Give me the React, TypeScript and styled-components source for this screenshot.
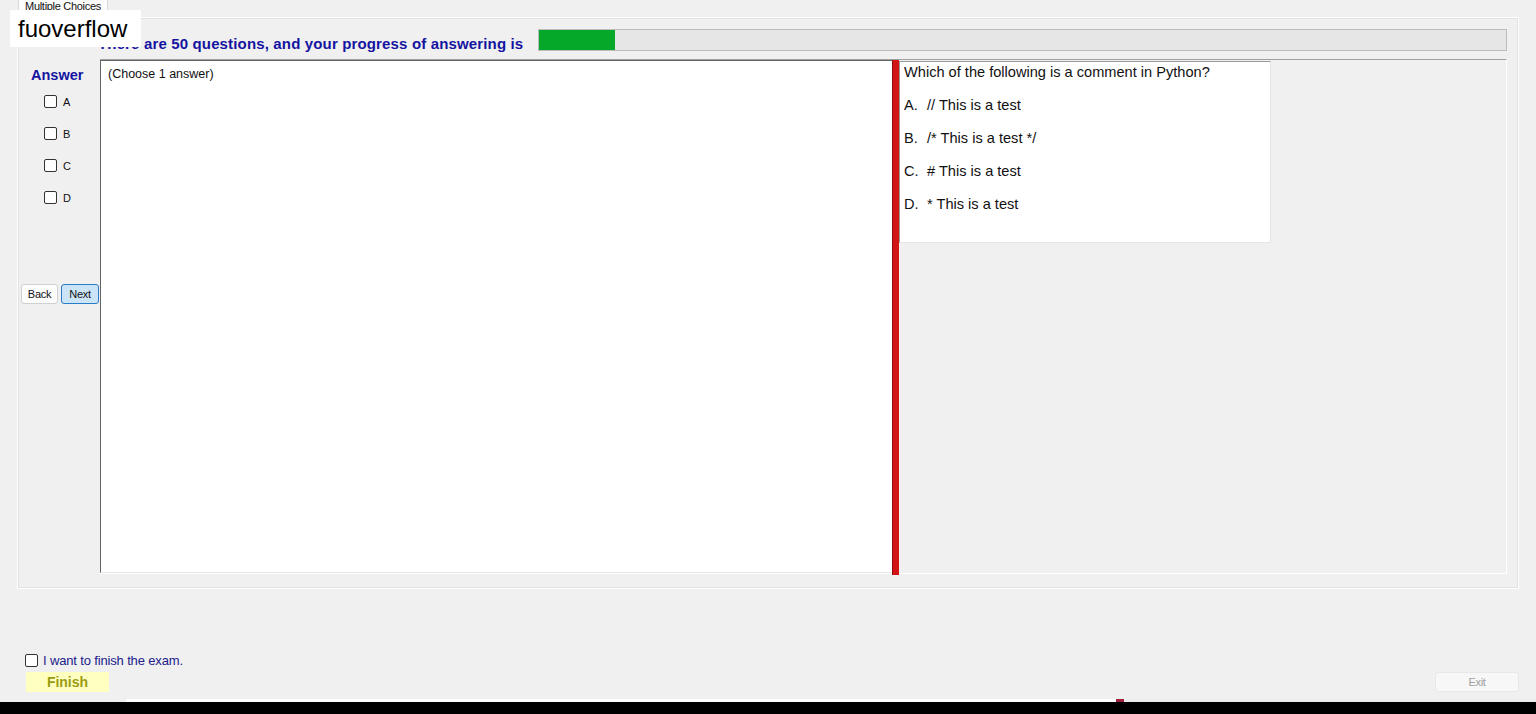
import React from "react";
import styled, { createGlobalStyle } from "styled-components";

const Global = createGlobalStyle`
  html, body { margin: 0; padding: 0; background: #f0f0f0; }
  body { font-family: "Liberation Sans", Arial, sans-serif; }
  * { box-sizing: border-box; }
`;

const Page = styled.div`
  position: relative;
  width: 1536px;
  height: 714px;
  overflow: hidden;
  background: #f0f0f0;
  display: flex;
  flex-direction: column;
  font-family: "Liberation Sans", Arial, sans-serif;
`;

const TabStrip = styled.div`
  height: 17px;
  padding-left: 18px;
  display: flex;
  align-items: flex-start;
`;

const Tab = styled.div`
  height: 18px;
  width: 90px;
  margin-top: -2px;
  background: #fcfcfc;
  border: 1px solid #d9d9d9;
  border-bottom: none;
  font-size: 11px;
  line-height: 14px;
  color: #111;
  text-align: center;
  letter-spacing: -0.3px;
  position: relative;
  z-index: 1;
`;

const Watermark = styled.div`
  position: absolute;
  left: 10px;
  top: 10px;
  width: 131px;
  height: 37px;
  background: #ffffff;
  font-size: 24px;
  line-height: 37px;
  padding-left: 8px;
  color: #000;
  z-index: 5;
`;

const Panel = styled.div`
  margin-left: 17px;
  width: 1502px;
  height: 572px;
  border: 1px solid #ffffff;
  box-shadow: inset 1px 1px 0 #e2e2e2, inset -1px -1px 0 #e2e2e2;
  display: flex;
  flex-direction: column;
  padding-top: 11px;
`;

const HeadRow = styled.div`
  height: 22px;
  display: flex;
  align-items: center;
  padding-left: 80px;
`;

const Heading = styled.div`
  font-size: 15px;
  font-weight: bold;
  color: #1414a0;
  padding-top: 7px;
  width: 440px;
  letter-spacing: 0.15px;
  white-space: nowrap;
`;

const ProgressTrack = styled.div`
  width: 969px;
  height: 22px;
  background: #e6e6e6;
  border: 1px solid #bcbcbc;
  padding: 0;
`;

const ProgressFill = styled.div`
  height: 100%;
  background: #06a82a;
`;

const MainRow = styled.div`
  margin-top: 8px;
  height: 515px;
  display: flex;
`;

const LeftCol = styled.div`
  width: 82px;
  display: flex;
  flex-direction: column;
`;

const AnswerLabel = styled.div`
  font-size: 14.5px;
  font-weight: bold;
  color: #1414a0;
  padding: 8px 0 0 13px;
  line-height: 16px;
`;

const Options = styled.div`
  margin-top: 12px;
  padding-left: 26px;
  display: flex;
  flex-direction: column;
  gap: 19px;
`;

const OptionRow = styled.label`
  display: flex;
  align-items: center;
  height: 13px;
  font-size: 11px;
  color: #111;
  gap: 6px;
`;

const Check = styled.input.attrs({ type: "checkbox" })`
  appearance: none;
  margin: 0;
  width: 13px;
  height: 13px;
  border: 1px solid #333;
  border-radius: 2px;
  background: #fff;
  flex: none;
`;

const NavRow = styled.div`
  margin-top: 80px;
  padding-left: 3px;
  display: flex;
  gap: 3px;
`;

const NavButton = styled.button<{ $primary?: boolean }>`
  height: 20px;
  width: ${(p) => (p.$primary ? "38px" : "37px")};
  padding: 0;
  font-family: "Liberation Sans", Arial, sans-serif;
  font-size: 11px;
  letter-spacing: -0.3px;
  color: #111;
  border-radius: 3px;
  border: 1px solid ${(p) => (p.$primary ? "#2a7cc7" : "#d0d0d0")};
  background: ${(p) => (p.$primary ? "#cce4f7" : "#fdfdfd")};
`;

const Container = styled.div`
  width: 1407px;
  display: flex;
  border-top: 1px solid #a0a0a0;
  border-right: 1px solid #ffffff;
  border-bottom: 1px solid #ffffff;
`;

const AnswerBox = styled.div`
  width: 792px;
  background: #ffffff;
  border-left: 1px solid #646464;
  border-top: 1px solid #646464;
  border-bottom: 1px solid #e6e6e6;
  padding: 6px 7px;
  font-size: 12.5px;
  color: #111;
`;

const Splitter = styled.div`
  width: 7px;
  background: #d21414;
  border-left: 1px solid #8e0c0c;
  margin-bottom: -2px;
`;

const RightPane = styled.div`
  flex: 1;
  background: #f0f0f0;
  padding-top: 1px;
`;

const QuestionBox = styled.div`
  width: 372px;
  height: 182px;
  background: #ffffff;
  border-left: 1px solid #9a9a9a;
  border-top: 1px solid #9a9a9a;
  border-right: 1px solid #e4e4e4;
  border-bottom: 1px solid #e4e4e4;
  padding: 2px 4px;
  font-size: 14.6px;
  color: #111;
`;

const QLine = styled.div`
  line-height: 16px;
  margin-bottom: 17px;
  display: flex;
  white-space: pre;
`;

const QLetter = styled.span`
  width: 23px;
`;

const BottomArea = styled.div`
  flex: 1;
  padding: 65px 17px 0 25px;
  display: flex;
  flex-direction: column;
`;

const FinishCheck = styled.label`
  display: flex;
  align-items: center;
  gap: 5px;
  height: 13px;
  font-size: 13px;
  color: #20208c;
  letter-spacing: -0.15px;
`;

const ButtonRow = styled.div`
  margin-top: 5px;
  display: flex;
  justify-content: space-between;
  align-items: center;
`;

const FinishButton = styled.button`
  margin-left: 1px;
  width: 83px;
  height: 20px;
  border: none;
  background: #ffffc0;
  color: #9c9c14;
  font-family: "Liberation Sans", Arial, sans-serif;
  font-size: 14px;
  font-weight: bold;
  padding: 0;
`;

const ExitButton = styled.button`
  width: 84px;
  height: 20px;
  border: 1px solid #e8e8e8;
  border-radius: 3px;
  background: #f7f7f7;
  color: #a0a0a0;
  font-family: "Liberation Sans", Arial, sans-serif;
  font-size: 11px;
  letter-spacing: -0.3px;
  padding: 0;
`;

const StripTop = styled.div`
  height: 3px;
  display: flex;
`;

const StripSeg = styled.div<{ $w?: number; $c: string }>`
  ${(p) => (p.$w ? `width: ${p.$w}px;` : "flex: 1;")}
  background: ${(p) => p.$c};
`;

const BlackBar = styled.div`
  height: 12px;
  background: #000;
`;

const options = [
  ["A.", "// This is a test"],
  ["B.", "/* This is a test */"],
  ["C.", "# This is a test"],
  ["D.", "* This is a test"],
];

export default function App() {
  return (
    <Page>
      <Global />
      <Watermark>fuoverflow</Watermark>
      <TabStrip>
        <Tab>Multiple Choices</Tab>
      </TabStrip>
      <Panel>
        <HeadRow>
          <Heading>There are 50 questions, and your progress of answering is</Heading>
          <ProgressTrack>
            <ProgressFill style={{ width: `${(76 / 967) * 100}%` }} />
          </ProgressTrack>
        </HeadRow>
        <MainRow>
          <LeftCol>
            <AnswerLabel>Answer</AnswerLabel>
            <Options>
              {["A", "B", "C", "D"].map((l) => (
                <OptionRow key={l}>
                  <Check />
                  {l}
                </OptionRow>
              ))}
            </Options>
            <NavRow>
              <NavButton>Back</NavButton>
              <NavButton $primary>Next</NavButton>
            </NavRow>
          </LeftCol>
          <Container>
            <AnswerBox>(Choose 1 answer)</AnswerBox>
            <Splitter />
            <RightPane>
              <QuestionBox>
                <QLine>Which of the following is a comment in Python?</QLine>
                {options.map(([l, t]) => (
                  <QLine key={l}>
                    <QLetter>{l}</QLetter>
                    {t}
                  </QLine>
                ))}
              </QuestionBox>
            </RightPane>
          </Container>
        </MainRow>
      </Panel>
      <BottomArea>
        <FinishCheck>
          <Check />
          I want to finish the exam.
        </FinishCheck>
        <ButtonRow>
          <FinishButton>Finish</FinishButton>
          <ExitButton>Exit</ExitButton>
        </ButtonRow>
      </BottomArea>
      <StripTop>
        <StripSeg $w={126} $c="#f0f0f0" />
        <StripSeg $w={990} $c="#ffffff" />
        <StripSeg $w={8} $c="#a02040" />
        <StripSeg $c="#ececec" />
      </StripTop>
      <BlackBar />
    </Page>
  );
}
